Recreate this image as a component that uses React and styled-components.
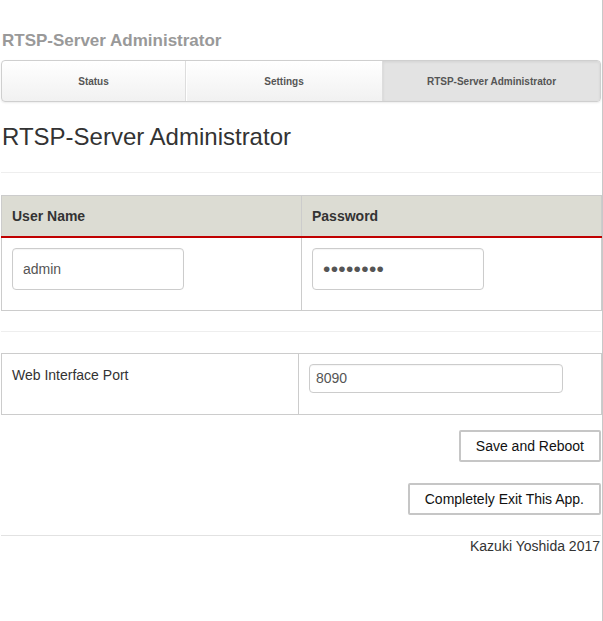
import React from 'react';
import styled, { createGlobalStyle } from 'styled-components';

const TABS = [
  { id: 'status', label: 'Status', width: 183 },
  { id: 'settings', label: 'Settings', width: 197 },
  { id: 'rtsp', label: 'RTSP-Server Administrator', width: 219, active: true },
];

const GlobalStyle = createGlobalStyle`
  html, body {
    margin: 0;
    padding: 0;
    background: #ffffff;
  }
  body {
    font-family: "Liberation Sans", Arial, sans-serif;
    font-size: 14px;
    color: #333333;
  }
`;

const Page = styled.div`
  width: 600px;
  min-height: 621px;
  padding: 0 1px;
  border-right: 1px solid #c8c8c8;
  box-sizing: content-box;
  display: flex;
  flex-direction: column;
`;

const AppTitle = styled.div`
  margin: 31px 0 0 1px;
  font-size: 17px;
  line-height: 20px;
  font-weight: bold;
  color: #999999;
`;

const TabBar = styled.div`
  margin-top: 9px;
  height: 42px;
  display: flex;
  border: 1px solid #cfcfcf;
  border-radius: 4px;
  box-sizing: border-box;
  background: linear-gradient(#ffffff, #f1f1f1);
  box-shadow: 0 1px 2px rgba(0, 0, 0, 0.08);
  overflow: hidden;
`;

const Tab = styled.div`
  flex: 0 0 ${(p) => p.$width}px;
  box-sizing: border-box;
  display: flex;
  align-items: center;
  justify-content: center;
  font-size: 10px;
  font-weight: bold;
  color: #555555;
  border-left: ${(p) => (p.$first ? 'none' : '1px solid #dddddd')};
  box-shadow: ${(p) => (p.$first ? 'none' : 'inset 1px 0 0 #ffffff')};
  background: ${(p) => (p.$active ? '#e3e3e3' : 'transparent')};
  ${(p) => p.$active && 'box-shadow: inset 0 1px 3px rgba(0,0,0,0.08);'}
  ${(p) => p.$active && 'flex: 1 1 auto;'}
`;

const Heading = styled.h2`
  margin: 22px 0 0 1px;
  font-size: 24px;
  line-height: 26px;
  font-weight: normal;
  color: #333333;
`;

const Rule = styled.hr`
  margin: ${(p) => p.$top}px 0 0 0;
  border: 0;
  border-top: 1px solid ${(p) => p.$color || '#eeeeee'};
`;

const Table = styled.table`
  margin-top: ${(p) => p.$top}px;
  width: 600px;
  border-collapse: collapse;
  table-layout: fixed;
`;

const HeadCell = styled.th`
  height: 41px;
  padding: 0 10px;
  text-align: left;
  font-size: 14px;
  font-weight: bold;
  color: #333333;
  background: #dcdcd3;
  border: 1px solid #cccccc;
  border-bottom: 2px solid #c00000;
  box-sizing: border-box;
`;

const Cell = styled.td`
  padding: ${(p) => p.$pad || '10px 10px 20px'};
  border: 1px solid #cccccc;
  vertical-align: top;
  line-height: 20px;
  color: #333333;
`;

const TextInput = styled.input`
  display: block;
  width: ${(p) => p.$w}px;
  height: ${(p) => p.$h}px;
  padding: 0 ${(p) => p.$px}px;
  box-sizing: border-box;
  border: 1px solid #cccccc;
  border-radius: 4px;
  font-family: "Liberation Sans", Arial, sans-serif;
  font-size: 14px;
  color: #555555;
  background: #ffffff;
  outline: none;
  box-shadow: inset 0 1px 1px rgba(0, 0, 0, 0.04);

  &[type='password'] {
    font-size: 21px;
    letter-spacing: 0.3px;
  }
`;

const Actions = styled.div`
  margin-top: 15px;
  display: flex;
  flex-direction: column;
  align-items: flex-end;
  gap: 21px;
`;

const Button = styled.button`
  height: 32px;
  padding: 0 15px;
  font-family: "Liberation Sans", Arial, sans-serif;
  font-size: 14px;
  color: #111111;
  background: #ffffff;
  border: 2px solid #c6c6c6;
  border-radius: 2px;
  cursor: pointer;
`;

const Footer = styled.div`
  text-align: right;
  line-height: 20px;
  font-size: 14px;
  color: #333333;
  padding-right: 1px;
`;

export default function App() {
  return (
    <>
      <GlobalStyle />
      <Page>
        <AppTitle>RTSP-Server Administrator</AppTitle>
        <TabBar>
          {TABS.map((t, i) => (
            <Tab key={t.id} $width={t.width} $first={i === 0} $active={t.active}>
              {t.label}
            </Tab>
          ))}
        </TabBar>

        <Heading>RTSP-Server Administrator</Heading>
        <Rule $top={22} />

        <Table $top={22}>
          <colgroup>
            <col style={{ width: 300 }} />
            <col style={{ width: 300 }} />
          </colgroup>
          <thead>
            <tr>
              <HeadCell>User Name</HeadCell>
              <HeadCell>Password</HeadCell>
            </tr>
          </thead>
          <tbody>
            <tr>
              <Cell>
                <TextInput $w={172} $h={42} $px={10} defaultValue="admin" />
              </Cell>
              <Cell>
                <TextInput $w={172} $h={42} $px={10} type="password" defaultValue="********" />
              </Cell>
            </tr>
          </tbody>
        </Table>

        <Rule $top={20} />

        <Table $top={21}>
          <colgroup>
            <col style={{ width: 297 }} />
            <col style={{ width: 303 }} />
          </colgroup>
          <tbody>
            <tr>
              <Cell $pad="11px 10px 20px">Web Interface Port</Cell>
              <Cell $pad="10px 10px 21px">
                <TextInput $w={254} $h={29} $px={6} defaultValue="8090" />
              </Cell>
            </tr>
          </tbody>
        </Table>

        <Actions>
          <Button>Save and Reboot</Button>
          <Button>Completely Exit This App.</Button>
        </Actions>

        <Rule $top={20} $color="#e2e2e2" />
        <Footer>Kazuki Yoshida 2017</Footer>
      </Page>
    </>
  );
}
